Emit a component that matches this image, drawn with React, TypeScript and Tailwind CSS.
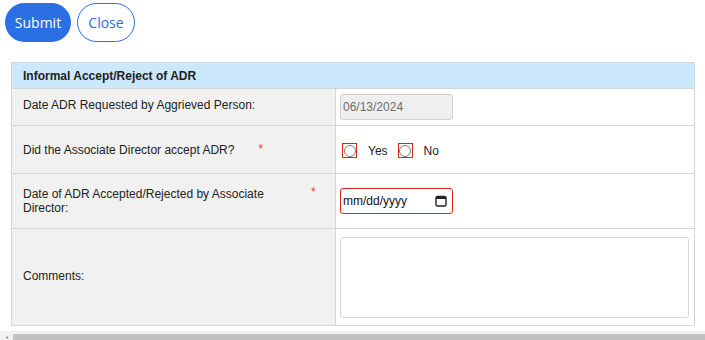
import React from "react";

const Radio = () => (
  <span className="flex h-[15px] w-[15px] items-center justify-center border border-[#e0241b]">
    <span className="h-[12px] w-[12px] rounded-full border border-[#7a7a7a] bg-white" />
  </span>
);

export default function App() {
  const label = "text-[12px] text-[#222] leading-[14px]";
  return (
    <div className="relative h-[340px] w-[705px] overflow-hidden bg-white" style={{ fontFamily: "'Liberation Sans', Arial, sans-serif" }}>
      <div className="flex gap-[6px] pl-[5px] pt-[3px]" style={{ fontFamily: "'Open Sans', 'Noto Sans', sans-serif" }}>
        <button className="h-[39px] w-[66px] rounded-full bg-[#2a6fe3] text-[14px] text-white">Submit</button>
        <button className="h-[39px] w-[58px] rounded-full border border-[#2a6fe3] bg-white text-[14px] text-[#2a6fe3]">Close</button>
      </div>

      <div className="ml-[11px] mt-[20px] w-[684px] border border-[#d6d6d6]">
        <div className="flex h-[26px] items-center border-b border-[#d6d6d6] bg-[#cce8fc] pl-[11px] text-[12px] font-bold text-[#222]">
          Informal Accept/Reject of ADR
        </div>

        <div className="grid grid-cols-[324px_1fr]">
          {/* Row 1 */}
          <div className="flex h-[37px] items-center border-b border-r border-[#d6d6d6] bg-[#f1f1f1] pl-[11px]">
            <span className={label + " -mt-[4px]"}>Date ADR Requested by Aggrieved Person:</span>
          </div>
          <div className="flex h-[37px] items-center border-b border-[#d6d6d6] pl-[4px]">
            <div className="flex h-[26px] w-[113px] items-center rounded-[3px] border border-[#d0d0d0] bg-[#efefef] pl-[2px] text-[12px] text-[#6d6d6d]">
              06/13/2024
            </div>
          </div>

          {/* Row 2 */}
          <div className="flex h-[48px] items-center border-b border-r border-[#d6d6d6] bg-[#f1f1f1] pl-[11px]">
            <span className={label}>Did the Associate Director accept ADR?</span>
            <span className="ml-[24px] -mt-[2px] text-[12px] text-[#ee3a2f]">*</span>
          </div>
          <div className="flex h-[48px] items-center border-b border-[#d6d6d6] pl-[6px] pt-[2px] text-[12px] text-[#222]">
            <Radio />
            <span className="ml-[11px]">Yes</span>
            <span className="ml-[10px]"><Radio /></span>
            <span className="ml-[11px]">No</span>
          </div>

          {/* Row 3 */}
          <div className="flex h-[55px] items-center border-b border-r border-[#d6d6d6] bg-[#f1f1f1] pl-[11px]">
            <span className={label + " w-[278px]"}>Date of ADR Accepted/Rejected by Associate Director:</span>
            <span className="ml-[10px] -mt-[18px] text-[12px] text-[#ee3a2f]">*</span>
          </div>
          <div className="flex h-[55px] items-center border-b border-[#d6d6d6] pl-[4px]">
            <div className="flex h-[26px] w-[113px] items-center justify-between rounded-[3px] border border-[#e0241b] bg-white pl-[2px] pr-[5px] text-[12px] text-[#111]">
              <span>mm/dd/yyyy</span>
              <svg width="12" height="12" viewBox="0 0 12 12">
                <rect x="1" y="1.5" width="10" height="9.5" rx="1.5" fill="none" stroke="#222" strokeWidth="1.4" />
                <rect x="1" y="1.5" width="10" height="2.5" fill="#222" />
              </svg>
            </div>
          </div>

          {/* Row 4 */}
          <div className="flex h-[96px] items-center border-r border-[#d6d6d6] bg-[#f1f1f1] pl-[11px]">
            <span className={label + " mt-[-3px]"}>Comments:</span>
          </div>
          <div className="flex h-[96px] items-center pl-[4px] pr-[5px]">
            <div className="h-[81px] w-full rounded-[3px] border border-[#d6d6d6] bg-white" />
          </div>
        </div>
      </div>

      <div className="mt-[5px] flex h-[9px] flex-col bg-[#f1f1f1]">
        <div className="flex h-[3px]" />
        <div className="flex h-[6px]">
          <div className="flex w-[13px] items-end justify-center text-[6px] leading-[6px] text-[#999]">◂</div>
          <div className="flex-1 bg-[#c1c1c1]" />
        </div>
      </div>
    </div>
  );
}
